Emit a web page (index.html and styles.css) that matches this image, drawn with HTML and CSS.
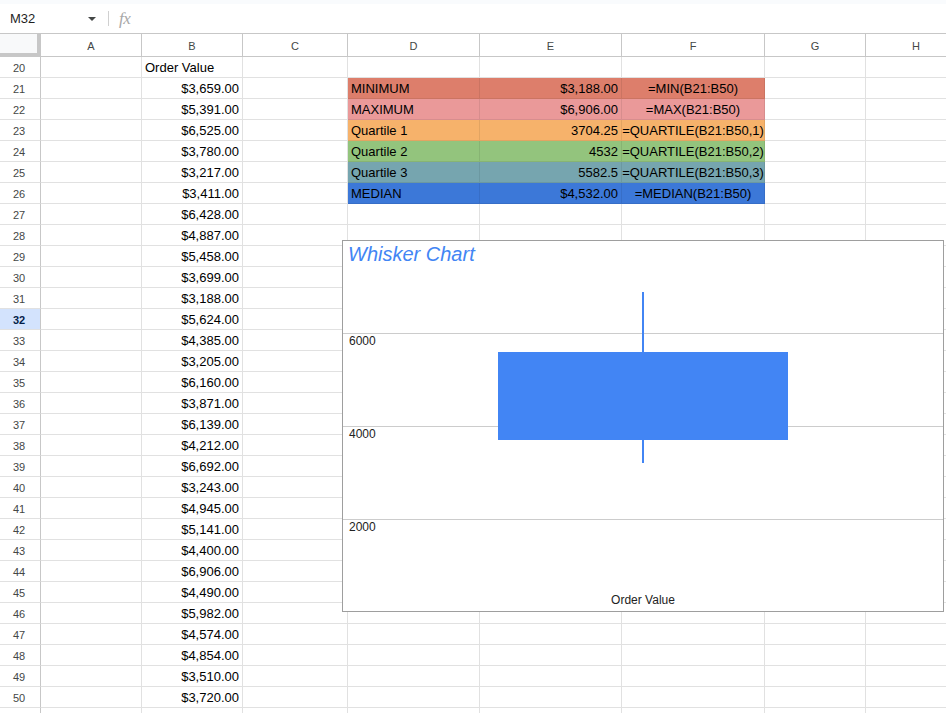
FILE: index.html
```html
<!DOCTYPE html>
<html>
<head>
<meta charset="utf-8">
<link rel="stylesheet" href="styles.css">
</head>
<body>
<div class="topstrip"></div>
<div class="fbar">
  <div class="namebox"><span class="ref">M32</span><span class="caret"></span></div>
  <div class="sep"></div>
  <div class="fx">fx</div>
</div>
<div class="sheet">
  <div class="corner"></div><div class="ch">A</div><div class="ch">B</div><div class="ch">C</div><div class="ch">D</div><div class="ch">E</div><div class="ch">F</div><div class="ch">G</div><div class="ch">H</div>

  <div class="rh">20</div><div class="c"></div><div class="c">Order Value</div><div class="c"></div><div class="c"></div><div class="c"></div><div class="c"></div><div class="c"></div><div class="c"></div>
  <div class="rh">21</div><div class="c"></div><div class="c n">$3,659.00</div><div class="c"></div><div class="c red">MINIMUM</div><div class="c n red">$3,188.00</div><div class="c f red"><span>=MIN(B21:B50)</span></div><div class="c"></div><div class="c"></div>
  <div class="rh">22</div><div class="c"></div><div class="c n">$5,391.00</div><div class="c"></div><div class="c pink">MAXIMUM</div><div class="c n pink">$6,906.00</div><div class="c f pink"><span>=MAX(B21:B50)</span></div><div class="c"></div><div class="c"></div>
  <div class="rh">23</div><div class="c"></div><div class="c n">$6,525.00</div><div class="c"></div><div class="c orange">Quartile 1</div><div class="c n orange">3704.25</div><div class="c f orange"><span>=QUARTILE(B21:B50,1)</span></div><div class="c"></div><div class="c"></div>
  <div class="rh">24</div><div class="c"></div><div class="c n">$3,780.00</div><div class="c"></div><div class="c green">Quartile 2</div><div class="c n green">4532</div><div class="c f green"><span>=QUARTILE(B21:B50,2)</span></div><div class="c"></div><div class="c"></div>
  <div class="rh">25</div><div class="c"></div><div class="c n">$3,217.00</div><div class="c"></div><div class="c teal">Quartile 3</div><div class="c n teal">5582.5</div><div class="c f teal"><span>=QUARTILE(B21:B50,3)</span></div><div class="c"></div><div class="c"></div>
  <div class="rh">26</div><div class="c"></div><div class="c n">$3,411.00</div><div class="c"></div><div class="c blue">MEDIAN</div><div class="c n blue">$4,532.00</div><div class="c f blue"><span>=MEDIAN(B21:B50)</span></div><div class="c"></div><div class="c"></div>
  <div class="rh">27</div><div class="c"></div><div class="c n">$6,428.00</div><div class="c"></div><div class="c"></div><div class="c"></div><div class="c"></div><div class="c"></div><div class="c"></div>
  <div class="rh">28</div><div class="c"></div><div class="c n">$4,887.00</div><div class="c"></div><div class="c"></div><div class="c"></div><div class="c"></div><div class="c"></div><div class="c"></div>
  <div class="rh">29</div><div class="c"></div><div class="c n">$5,458.00</div><div class="c"></div><div class="c"></div><div class="c"></div><div class="c"></div><div class="c"></div><div class="c"></div>
  <div class="rh">30</div><div class="c"></div><div class="c n">$3,699.00</div><div class="c"></div><div class="c"></div><div class="c"></div><div class="c"></div><div class="c"></div><div class="c"></div>
  <div class="rh">31</div><div class="c"></div><div class="c n">$3,188.00</div><div class="c"></div><div class="c"></div><div class="c"></div><div class="c"></div><div class="c"></div><div class="c"></div>
  <div class="rh sel">32</div><div class="c"></div><div class="c n">$5,624.00</div><div class="c"></div><div class="c"></div><div class="c"></div><div class="c"></div><div class="c"></div><div class="c"></div>
  <div class="rh">33</div><div class="c"></div><div class="c n">$4,385.00</div><div class="c"></div><div class="c"></div><div class="c"></div><div class="c"></div><div class="c"></div><div class="c"></div>
  <div class="rh">34</div><div class="c"></div><div class="c n">$3,205.00</div><div class="c"></div><div class="c"></div><div class="c"></div><div class="c"></div><div class="c"></div><div class="c"></div>
  <div class="rh">35</div><div class="c"></div><div class="c n">$6,160.00</div><div class="c"></div><div class="c"></div><div class="c"></div><div class="c"></div><div class="c"></div><div class="c"></div>
  <div class="rh">36</div><div class="c"></div><div class="c n">$3,871.00</div><div class="c"></div><div class="c"></div><div class="c"></div><div class="c"></div><div class="c"></div><div class="c"></div>
  <div class="rh">37</div><div class="c"></div><div class="c n">$6,139.00</div><div class="c"></div><div class="c"></div><div class="c"></div><div class="c"></div><div class="c"></div><div class="c"></div>
  <div class="rh">38</div><div class="c"></div><div class="c n">$4,212.00</div><div class="c"></div><div class="c"></div><div class="c"></div><div class="c"></div><div class="c"></div><div class="c"></div>
  <div class="rh">39</div><div class="c"></div><div class="c n">$6,692.00</div><div class="c"></div><div class="c"></div><div class="c"></div><div class="c"></div><div class="c"></div><div class="c"></div>
  <div class="rh">40</div><div class="c"></div><div class="c n">$3,243.00</div><div class="c"></div><div class="c"></div><div class="c"></div><div class="c"></div><div class="c"></div><div class="c"></div>
  <div class="rh">41</div><div class="c"></div><div class="c n">$4,945.00</div><div class="c"></div><div class="c"></div><div class="c"></div><div class="c"></div><div class="c"></div><div class="c"></div>
  <div class="rh">42</div><div class="c"></div><div class="c n">$5,141.00</div><div class="c"></div><div class="c"></div><div class="c"></div><div class="c"></div><div class="c"></div><div class="c"></div>
  <div class="rh">43</div><div class="c"></div><div class="c n">$4,400.00</div><div class="c"></div><div class="c"></div><div class="c"></div><div class="c"></div><div class="c"></div><div class="c"></div>
  <div class="rh">44</div><div class="c"></div><div class="c n">$6,906.00</div><div class="c"></div><div class="c"></div><div class="c"></div><div class="c"></div><div class="c"></div><div class="c"></div>
  <div class="rh">45</div><div class="c"></div><div class="c n">$4,490.00</div><div class="c"></div><div class="c"></div><div class="c"></div><div class="c"></div><div class="c"></div><div class="c"></div>
  <div class="rh">46</div><div class="c"></div><div class="c n">$5,982.00</div><div class="c"></div><div class="c"></div><div class="c"></div><div class="c"></div><div class="c"></div><div class="c"></div>
  <div class="rh">47</div><div class="c"></div><div class="c n">$4,574.00</div><div class="c"></div><div class="c"></div><div class="c"></div><div class="c"></div><div class="c"></div><div class="c"></div>
  <div class="rh">48</div><div class="c"></div><div class="c n">$4,854.00</div><div class="c"></div><div class="c"></div><div class="c"></div><div class="c"></div><div class="c"></div><div class="c"></div>
  <div class="rh">49</div><div class="c"></div><div class="c n">$3,510.00</div><div class="c"></div><div class="c"></div><div class="c"></div><div class="c"></div><div class="c"></div><div class="c"></div>
  <div class="rh">50</div><div class="c"></div><div class="c n">$3,720.00</div><div class="c"></div><div class="c"></div><div class="c"></div><div class="c"></div><div class="c"></div><div class="c"></div>
  <div class="rh"></div><div class="c"></div><div class="c"></div><div class="c"></div><div class="c"></div><div class="c"></div><div class="c"></div><div class="c"></div><div class="c"></div>
</div>

<div class="chart">
  <svg class="plot" width="600" height="370" viewBox="0 0 600 370">
    <text class="title" x="5" y="20">Whisker Chart</text>
    <line class="gl" x1="0" y1="92.5" x2="600" y2="92.5"/>
    <line class="gl" x1="0" y1="185.5" x2="600" y2="185.5"/>
    <line class="gl" x1="0" y1="278.5" x2="600" y2="278.5"/>
    <text class="lbl" x="6" y="104">6000</text>
    <text class="lbl" x="6" y="197">4000</text>
    <text class="lbl" x="6" y="290">2000</text>
    <line class="whisker" x1="300" y1="51" x2="300" y2="222"/>
    <rect class="box" x="155" y="111" width="290" height="88"/>
    <text class="lbl axis" x="300" y="363">Order Value</text>
  </svg>
</div>
</body>
</html>
```

FILE: styles.css
```css
html, body {
  margin: 0;
  padding: 0;
  background: #ffffff;
  width: 946px;
  height: 713px;
  overflow: hidden;
  font-family: "Liberation Sans", Arial, sans-serif;
}

.topstrip {
  height: 4px;
  background: #f9fbfd;
}

.fbar {
  height: 30px;
  box-sizing: border-box;
  border-bottom: 1px solid #c7c7c7;
  display: flex;
  align-items: center;
  background: #ffffff;
}

.namebox {
  width: 98px;
  display: flex;
  align-items: center;
  padding-left: 10px;
  box-sizing: border-box;
}

.ref {
  font-size: 13px;
  color: #1f1f1f;
}

.caret {
  margin-left: auto;
  width: 0;
  height: 0;
  border-left: 4px solid transparent;
  border-right: 4px solid transparent;
  border-top: 4px solid #444746;
  margin-right: 2px;
}

.sep {
  width: 1px;
  height: 15px;
  background: #d0d0d0;
  margin-left: 10px;
}

.fx {
  margin-left: 10px;
  font-family: "Liberation Serif", serif;
  font-style: italic;
  font-size: 17px;
  color: #a8a8a8;
  letter-spacing: -0.5px;
}

.sheet {
  display: grid;
  grid-template-columns: 41px 101px 101px 105px 132px 142px 143px 101px 101px;
  grid-template-rows: 23px;
  grid-auto-rows: 21px;
  width: 967px;
}

.corner {
  background: #f8f9fa;
  border-right: 4px solid #c7c7c7;
  border-bottom: 4px solid #c7c7c7;
  box-sizing: border-box;
}

.ch {
  box-sizing: border-box;
  border-right: 1px solid #c7c7c7;
  border-bottom: 1px solid #c7c7c7;
  font-size: 11px;
  color: #444746;
  display: flex;
  align-items: center;
  justify-content: center;
  padding-top: 1px;
}

.rh {
  box-sizing: border-box;
  border-right: 1px solid #c7c7c7;
  border-bottom: 1px solid #e1e1e1;
  font-size: 11px;
  color: #444746;
  display: flex;
  align-items: center;
  justify-content: center;
  padding-right: 2px;
  padding-top: 1px;
}

.rh.sel {
  background: #d3e3fd;
  color: #041e49;
  font-weight: bold;
}

.c {
  box-sizing: border-box;
  border-right: 1px solid #e1e1e1;
  border-bottom: 1px solid #e1e1e1;
  font-size: 13px;
  color: #000000;
  line-height: 19px;
  padding: 1px 3px 0 3px;
  white-space: nowrap;
}

.n {
  text-align: right;
}

.f {
  display: flex;
  justify-content: center;
  overflow: visible;
  padding: 1px 0 0 0;
}

.f span {
  flex: none;
}

.red, .pink, .orange, .green, .teal, .blue {
  border-right-color: rgba(0, 0, 0, 0.08);
  border-bottom-color: rgba(0, 0, 0, 0.08);
}

.red { background: #dd7e6b; }
.pink { background: #ea9999; }
.orange { background: #f6b26b; }
.green { background: #93c47d; }
.teal { background: #76a5af; }
.blue { background: #3c78d8; }

.chart {
  position: absolute;
  left: 342px;
  top: 240px;
  width: 602px;
  height: 372px;
  box-sizing: border-box;
  border: 1px solid #9e9e9e;
  background: #ffffff;
}

.plot {
  display: block;
}

.title {
  font-family: "Liberation Sans", Arial, sans-serif;
  font-style: italic;
  font-size: 20px;
  fill: #4285f4;
}

.gl {
  stroke: #cccccc;
  stroke-width: 1;
}

.lbl {
  font-family: "Liberation Sans", Arial, sans-serif;
  font-size: 12px;
  fill: #222222;
}

.axis {
  text-anchor: middle;
}

.whisker {
  stroke: #4285f4;
  stroke-width: 2;
}

.box {
  fill: #4285f4;
}
```
